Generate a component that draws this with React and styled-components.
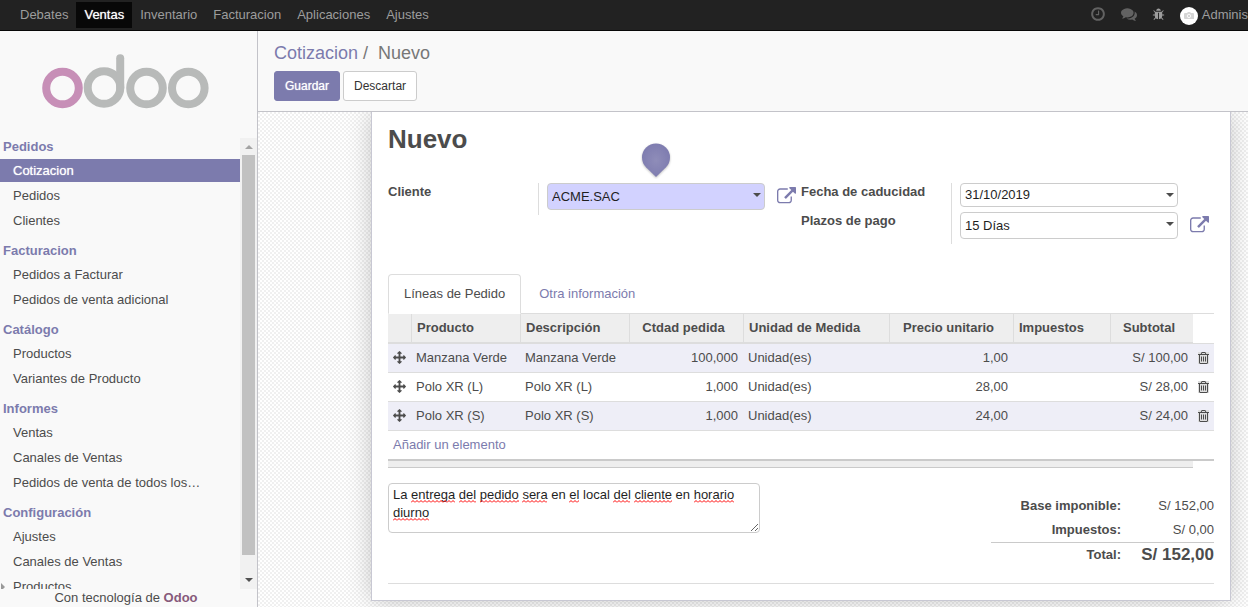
import React, { useState } from "react";
import styled, { createGlobalStyle, css } from "styled-components";

const GlobalStyle = createGlobalStyle`
  *, *::before, *::after { box-sizing: border-box; }
  body {
    margin: 0;
    color: #4c4c4c;
    background: #fff;
    font: 13px/18px "Liberation Sans", Arial, sans-serif;
  }
  button, input, select, textarea { font: inherit; color: inherit; }
  a { text-decoration: none; }
  ul { list-style: none; margin: 0; padding: 0; }
`;

const purple = "#7c7bad";
const line = "#ddd";
const edge = "#c3c3c9";

/* Thickens light text on a dark fill without changing its width. */
const strongLight = css`
  color: #fff;
  text-shadow: 0 0 1px rgba(255, 255, 255, 0.8);
`;

/* ---------- icons ---------- */

const iconPaths = {
  clock:
    "M1024 544v448q0 14-9 23t-23 9h-320q-14 0-23-9t-9-23v-64q0-14 9-23t23-9h224v-352q0-14 9-23t23-9h64q14 0 23 9t9 23zm416 352q0-148-73-273t-198-198-273-73-273 73-198 198-73 273 73 273 198 198 273 73 273-73 198-198 73-273zm224 0q0 209-103 385.5t-279.5 279.5-385.5 103-385.5-103-279.5-279.5-103-385.5 103-385.5 279.5-279.5 385.5-103 385.5 103 279.5 279.5 103 385.5z",
  comments:
    "M1408 768q0 139-94 257t-256.5 186.5-353.5 68.5q-86 0-176-16-124 88-278 128-36 9-86 16h-3q-11 0-20.5-8t-11.5-21q-1-3-1-6.5t.5-6.5 2-6l2.5-5 3.5-5.5 4-5 4.5-5 4-4.5q5-6 23-25t26-29.5 22.5-29 25-38.5 20.5-44q-124-72-195-177t-71-224q0-139 94-257t256.5-186.5 353.5-68.5 353.5 68.5 256.5 186.5 94 257zm384 256q0 120-71 224.5t-195 176.5q10 24 20.5 44t25 38.5 22.5 29 26 29.5 23 25q1 1 4 4.5t4.5 5 4 5 3.5 5.5l2.5 5 2 6 .5 6.5-1 6.5q-3 14-13 22t-22 7q-50-7-86-16-154-40-278-128-90 16-176 16-271 0-472-132 58 4 88 4 161 0 309-45t264-129q125-92 192-212t67-254q0-77-23-152 129 71 204 178t75 230z",
  bug: "M1696 960q0 26-19 45t-45 19h-224q0 171-67 290l208 209q19 19 19 45t-19 45q-18 19-45 19t-45-19l-198-197q-5 5-15 13t-42 28.5-65 36.5-82 29-97 13v-896h-128v896q-51 0-101.5-13.5t-87-33-66-39-43.5-32.5l-15-14-183 207q-20 21-48 21-24 0-43-16-19-18-20.5-44.5t15.5-46.5l202-227q-58-114-58-274h-224q-26 0-45-19t-19-45 19-45 45-19h224v-294l-173-173q-19-19-19-45t19-45 45-19 45 19l173 173h844l173-173q19-19 45-19t45 19 19 45-19 45l-173 173v294h224q26 0 45 19t19 45zm-480-576h-640q0-133 93.5-226.5t226.5-93.5 226.5 93.5 93.5 226.5z",
  move: "M1792 896q0 26-19 45l-256 256q-19 19-45 19t-45-19-19-45v-128h-384v384h128q26 0 45 19t19 45-19 45l-256 256q-19 19-45 19t-45-19l-256-256q-19-19-19-45t19-45 45-19h128v-384h-384v128q0 26-19 45t-45 19-45-19l-256-256q-19-19-19-45t19-45l256-256q19-19 45-19t45 19 19 45v128h384v-384h-128q-26 0-45-19t-19-45 19-45l256-256q19-19 45-19t45 19l256 256q19 19 19 45t-19 45-45 19h-128v384h384v-128q0-26 19-45t45-19 45 19l256 256q19 19 19 45z",
  trash:
    "M704 736v576q0 14-9 23t-23 9h-64q-14 0-23-9t-9-23v-576q0-14 9-23t23-9h64q14 0 23 9t9 23zm256 0v576q0 14-9 23t-23 9h-64q-14 0-23-9t-9-23v-576q0-14 9-23t23-9h64q14 0 23 9t9 23zm256 0v576q0 14-9 23t-23 9h-64q-14 0-23-9t-9-23v-576q0-14 9-23t23-9h64q14 0 23 9t9 23zm128 724v-948h-896v948q0 22 7 40.5t14.5 27 10.5 8.5h832q3 0 10.5-8.5t14.5-27 7-40.5zm-672-1076h448l-48-117q-7-9-17-11h-317q-10 2-17 11zm928 32v64q0 14-9 23t-23 9h-96v948q0 83-47 143.5t-113 60.5h-832q-66 0-113-58.5t-47-141.5v-952h-96q-14 0-23-9t-9-23v-64q0-14 9-23t23-9h309l70-167q15-37 54-63t79-26h320q40 0 79 26t54 63l70 167h309q14 0 23 9t9 23z",
  external:
    "M1408 928v320q0 119-84.5 203.5t-203.5 84.5h-832q-119 0-203.5-84.5t-84.5-203.5v-832q0-119 84.5-203.5t203.5-84.5h704q14 0 23 9t9 23v64q0 14-9 23t-23 9h-704q-66 0-113 47t-47 113v832q0 66 47 113t113 47h832q66 0 113-47t47-113v-320q0-14 9-23t23-9h64q14 0 23 9t9 23zm384-864v512q0 26-19 45t-45 19-45-19l-176-176-652 652q-10 10-23 10t-23-10l-114-114q-10-10-10-23t10-23l652-652-176-176q-19-19-19-45t19-45 45-19h512q26 0 45 19t19 45z",
};

const Svg = styled.svg`
  display: block;
  flex: none;
  fill: currentColor;
`;

const Icon = ({ name, size, width = size, viewBox = "0 0 1792 1792" }) => (
  <Svg width={width} height={size} viewBox={viewBox} aria-hidden="true">
    <path d={iconPaths[name]} />
  </Svg>
);

const CaretSvg = styled.svg`
  position: absolute;
  top: 10px;
  right: 4px;
  fill: #4c4c4c;
  pointer-events: none;
`;

const Caret = () => (
  <CaretSvg width="8" height="4" viewBox="0 0 8 4" aria-hidden="true">
    <path d="M0 0h8L4 4z" />
  </CaretSvg>
);

const Logo = () => (
  <svg width="168" height="56" viewBox="0 0 168 56" role="img" aria-label="odoo">
    <g fill="none" strokeWidth="8" stroke="#b8bab9">
      <circle cx="20.5" cy="34" r="16.3" stroke="#c78fb7" />
      <circle cx="62" cy="33.5" r="16.3" />
      <path d="M78.2 34V4.2" strokeLinecap="round" />
      <circle cx="104.5" cy="34" r="16.3" />
      <circle cx="146.3" cy="34" r="16.3" />
    </g>
  </svg>
);

/* ---------- shell ---------- */

const Page = styled.div`
  display: flex;
  flex-direction: column;
  height: 100vh;
  overflow: hidden;
`;

const TopBar = styled.header`
  display: flex;
  flex: none;
  justify-content: space-between;
  height: 31px;
  padding: 2px 0 2px 12px;
  background: #222;
  border-bottom: 1px solid #080808;
  color: #9d9d9d;
`;

const AppMenu = styled.nav`
  display: flex;
`;

const AppLink = styled.a`
  padding: 4px 8px;
  color: #9d9d9d;
  ${(p) =>
    p.$active &&
    css`
      background: #080808;
      ${strongLight}
    `}
`;

const Tray = styled.div`
  display: flex;
  align-items: center;
`;

const TrayButton = styled.button`
  display: flex;
  border: 0;
  padding: 0 0 2px;
  margin-right: 15px;
  background: none;
  color: ${(p) => (p.$bright ? "#9d9d9d" : "#626262")};
`;

const UserButton = styled.button`
  display: flex;
  align-items: center;
  gap: 4px;
  border: 0;
  padding: 0;
  background: none;
  white-space: nowrap;
`;

const Avatar = styled.span`
  display: grid;
  place-items: center;
  width: 18px;
  height: 18px;
  margin-top: 2px;
  border-radius: 50%;
  background: #fff;
`;

const Body = styled.div`
  display: flex;
  flex: 1;
  min-height: 0;
`;

/* ---------- sidebar ---------- */

const Sidebar = styled.aside`
  display: flex;
  flex-direction: column;
  flex: none;
  width: 258px;
  background: #f9f9f9;
  border-right: 1px solid ${edge};
`;

const Brand = styled.a`
  display: block;
  flex: none;
  height: 107px;
  padding: 23px 0 0 42px;
`;

const MenuScroller = styled.div`
  display: flex;
  flex: 1;
  min-height: 0;
`;

const Menu = styled.nav`
  flex: 1;
  min-width: 0;
  overflow: hidden;
`;

const MenuGroup = styled.section`
  margin-bottom: 10px;
`;

const MenuHeading = styled.h2`
  margin: 0 0 4px;
  padding-left: 3px;
  color: ${purple};
  font-size: 13px;
  line-height: 17px;
`;

const MenuList = styled.ul`
  display: flex;
  flex-direction: column;
  gap: 2px;
`;

const MenuLink = styled.a`
  display: block;
  position: relative;
  padding-left: 13px;
  line-height: 23px;
  color: #4c4c4c;
  ${(p) =>
    p.$active &&
    css`
      background: ${purple};
      ${strongLight}
    `}
  ${(p) =>
    p.$folded &&
    css`
      &::before {
        content: "";
        position: absolute;
        left: 1px;
        top: 8px;
        border: 4px solid transparent;
        border-left-color: #999;
        border-right-width: 0;
      }
    `}
`;

const Track = styled.div`
  display: flex;
  flex-direction: column;
  align-items: center;
  width: 17px;
  padding: 7px 0;
  background: #f1f1f1;
`;

const Thumb = styled.div`
  width: 13px;
  flex: 1;
  margin: 6px 0 23px;
  background: #c1c1c1;
`;

const TrackArrow = styled.span`
  border: 4px solid transparent;
  ${(p) =>
    p.$up
      ? "border-top-width: 0; border-bottom-color: #a3a3a3;"
      : "border-bottom-width: 0; border-top-color: #505050;"}
`;

const Powered = styled.footer`
  flex: none;
  padding-right: 5px;
  text-align: center;
  a { color: #875a7b; font-weight: bold; }
`;

/* ---------- main ---------- */

const Main = styled.main`
  display: flex;
  flex-direction: column;
  flex: 1;
  min-width: 0;
`;

const ControlPanel = styled.div`
  flex: none;
  height: 81px;
  padding: 12px 16px 0;
  background: #f9f9f9;
  border-bottom: 1px solid ${edge};
`;

const Crumbs = styled.nav`
  display: flex;
  margin-bottom: 8px;
  color: #777;
  font-size: 18px;
  line-height: 20px;
  a { color: ${purple}; margin-right: 5px; }
  span { margin-left: 10px; }
`;

const Actions = styled.div`
  display: flex;
  gap: 3px;
`;

const Button = styled.button`
  height: 30px;
  padding: 0 10px;
  border: 1px solid #ccc;
  border-radius: 3px;
  background: #fff;
  color: #333;
  font-size: 12px;
  ${(p) =>
    p.$primary &&
    css`
      border-color: ${purple};
      background: ${purple};
      ${strongLight}
    `}
`;

const Canvas = styled.div`
  flex: 1;
  min-height: 0;
  overflow: hidden;
  padding: 0 17px 0 113px;
  background: repeating-conic-gradient(#fff 0 25%, #f0f0f0 0 50%) 0 0 / 4px 4px;
`;

const Sheet = styled.form`
  padding: 12px 16px 16px;
  background: #fff;
  border: 1px solid #c8c8d3;
  border-top: 0;
  box-shadow: 0 0 24px -2px rgba(0, 0, 0, 0.25);
`;

const Title = styled.h1`
  margin: 0 0 29px;
  font-size: 26px;
  line-height: 30px;
`;

const Groups = styled.div`
  display: grid;
  grid-template-columns: 1fr 1fr;
  align-items: start;
`;

const Group = styled.div`
  display: grid;
  grid-template-columns: 151px 1fr;
  min-height: ${(p) => (p.$tall ? "61px" : "32px")};
`;

const Labels = styled.div`
  display: grid;
  align-content: start;
  row-gap: 11px;
  border-right: 1px solid ${line};
  label { font-weight: bold; }
`;

const Fields = styled.div`
  display: grid;
  align-content: start;
  row-gap: 5px;
  padding-left: 8px;
`;

const FieldRow = styled.div`
  display: flex;
  align-items: center;
`;

const Control = styled.div`
  position: relative;
  flex: 1;
  max-width: 218px;
`;

const fieldBox = css`
  display: block;
  width: 100%;
  padding: 0 16px 0 4px;
  border: 1px solid #ccc;
  border-radius: 4px;
  background: ${(p) => (p.$required ? "#d2d2ff" : "#fff")};
  color: #1f1f1f;
  appearance: none;
`;

const Select = styled.select`
  ${fieldBox}
  height: 27px;
`;

const DateInput = styled.input`
  ${fieldBox}
  height: 24px;
  padding-bottom: 2px;
`;

const OpenButton = styled.button`
  display: flex;
  flex: none;
  margin-left: 12px;
  padding: 0;
  border: 0;
  background: none;
  color: ${purple};
`;

const TipPin = styled.svg`
  position: absolute;
  left: 50%;
  bottom: calc(100% + 4px);
  margin-left: -16px;
`;

const Tabs = styled.div`
  display: flex;
  gap: 2px;
  margin-top: 30px;
  border-bottom: 1px solid ${line};
`;

const Tab = styled.button`
  height: 40px;
  margin-bottom: -1px;
  padding: 0 15px;
  border: 1px solid ${(p) => (p.$active ? line : "transparent")};
  border-bottom-color: ${(p) => (p.$active ? "#fff" : "transparent")};
  border-radius: 4px 4px 0 0;
  background: ${(p) => (p.$active ? "#fff" : "none")};
  color: ${(p) => (p.$active ? "#4c4c4c" : purple)};
`;

/* ---------- order lines ---------- */

const Lines = styled.table`
  width: 100%;
  table-layout: fixed;
  border-collapse: separate;
  border-spacing: 0;
  white-space: nowrap;
`;

const Th = styled.th`
  height: 30px;
  padding: 0 ${(p) => (p.$align ? 11 : 5)}px 0 5px;
  border-left: ${(p) => (p.$first ? "0" : `1px solid ${line}`)};
  border-bottom: 2px solid ${line};
  background: #eee;
  text-align: ${(p) => p.$align || "left"};
`;

const ThBlank = styled.td`
  padding: 0;
  border-bottom: 1px solid ${line};
`;

const Row = styled.tr`
  background: ${(p) => (p.$odd ? "#eeeef7" : "#fff")};
`;

const Td = styled.td`
  height: 29px;
  padding: 0 5px;
  border-bottom: 1px solid ${line};
  text-align: ${(p) => p.$align || "left"};
`;

const IconCell = styled(Td)`
  padding-bottom: 1px;
`;

const AddCell = styled.td`
  height: 30px;
  padding: 0 5px;
  border-bottom: 2px solid #cacaca;
  a { color: ${purple}; }
`;

const FootCell = styled.td`
  height: 7px;
  padding: 0;
  background: #eee;
  border-bottom: 1px solid #cacaca;
`;

const TrashButton = styled.button`
  display: flex;
  padding: 0;
  border: 0;
  background: #dedede;
`;

/* ---------- note and totals ---------- */

const Bottom = styled.div`
  display: flex;
  justify-content: space-between;
  align-items: flex-start;
  margin-top: 15px;
  padding-bottom: 15px;
  border-bottom: 1px solid ${line};
`;

const NoteBox = styled.div`
  position: relative;
  width: 45%;
`;

const Note = styled.textarea`
  display: block;
  width: 100%;
  height: 50px;
  padding: 2px 4px;
  border: 1px solid #ccc;
  border-radius: 4px;
  color: #1f1f1f;
  overflow: hidden;
`;

const Squiggles = styled.svg`
  position: absolute;
  inset: 0;
  width: 100%;
  height: 100%;
  pointer-events: none;
`;

const Totals = styled.table`
  margin-top: 11px;
  border-collapse: collapse;
  text-align: right;
`;

const TotalLabel = styled.th`
  width: 130px;
  height: 24px;
  padding: 0;
  text-align: right;
`;

const TotalValue = styled.td`
  width: 93px;
  padding: 0;
  ${(p) => p.$grand && "font-size: 17px; font-weight: bold;"}
`;

const GrandRow = styled.tr`
  border-top: 1px solid #cacaca;
  height: 26px;
`;

/* ---------- data ---------- */

const apps = ["Debates", "Ventas", "Inventario", "Facturacion", "Aplicaciones", "Ajustes"];

const menu = [
  ["Pedidos", ["Cotizacion", "Pedidos", "Clientes"]],
  ["Facturacion", ["Pedidos a Facturar", "Pedidos de venta adicional"]],
  ["Catálogo", ["Productos", "Variantes de Producto"]],
  ["Informes", ["Ventas", "Canales de Ventas", "Pedidos de venta de todos los…"]],
  ["Configuración", ["Ajustes", "Canales de Ventas", "Productos"]],
];

const columns = [
  { title: "", width: 23 },
  { title: "Producto", width: 109 },
  { title: "Descripción", width: 109 },
  { title: "Ctdad pedida", width: 114, align: "center" },
  { title: "Unidad de Medida", width: 146 },
  { title: "Precio unitario", width: 124, align: "center" },
  { title: "Impuestos", width: 97 },
  { title: "Subtotal", width: 83, align: "center" },
];

const orderLines = [
  ["Manzana Verde", "100,000", "1,00", "S/ 100,00"],
  ["Polo XR (L)", "1,000", "28,00", "S/ 28,00"],
  ["Polo XR (S)", "1,000", "24,00", "S/ 24,00"],
];

const noteLines = [
  "La entrega del pedido sera en el local del cliente en horario",
  "diurno",
];
const flagged = new Set(["entrega", "del", "pedido", "sera", "el", "cliente", "horario", "diurno"]);

/* Finds where each flagged word of the note starts and how wide it is. */
function spellingMarks() {
  const ctx = document.createElement("canvas").getContext("2d");
  ctx.font = '13px "Liberation Sans", Arial, sans-serif';
  const marks = [];
  noteLines.forEach((text, row) => {
    let before = "";
    text.split(" ").forEach((word) => {
      if (flagged.has(word)) {
        marks.push({
          x: 5 + Math.round(ctx.measureText(before).width),
          y: 16 + row * 18,
          width: Math.round(ctx.measureText(word).width),
        });
      }
      before += word + " ";
    });
  });
  return marks;
}

export default function App() {
  const [note, setNote] = useState(noteLines.join(" "));
  const [marks] = useState(spellingMarks);

  return (
    <Page>
      <GlobalStyle />
      <TopBar>
        <AppMenu>
          {apps.map((name) => (
            <AppLink key={name} href="#" $active={name === "Ventas"}>
              {name}
            </AppLink>
          ))}
        </AppMenu>
        <Tray>
          <TrayButton aria-label="Actividades"><Icon name="clock" size={16} /></TrayButton>
          <TrayButton aria-label="Conversaciones"><Icon name="comments" size={16} /></TrayButton>
          <TrayButton $bright aria-label="Depurar"><Icon name="bug" size={13} /></TrayButton>
          <UserButton>
            <Avatar>
              <svg width="10" height="8" viewBox="0 0 10 8" aria-hidden="true">
                <path d="M1 1h2l1-1h2l1 1h2q1 0 1 1v5H1Q0 7 0 6V2q0-1 1-1z" fill="#d5d5d5" />
                <circle cx="5" cy="4" r="1.7" fill="none" stroke="#fff" strokeWidth=".8" />
              </svg>
            </Avatar>
            Adminis
          </UserButton>
        </Tray>
      </TopBar>

      <Body>
        <Sidebar>
          <Brand href="#"><Logo /></Brand>
          <MenuScroller>
            <Menu>
              {menu.map(([heading, items]) => (
                <MenuGroup key={heading}>
                  <MenuHeading>{heading}</MenuHeading>
                  <MenuList>
                    {items.map((item) => (
                      <li key={item}>
                        <MenuLink
                          href="#"
                          $active={item === "Cotizacion"}
                          $folded={heading === "Configuración" && item === "Productos"}
                        >
                          {item}
                        </MenuLink>
                      </li>
                    ))}
                  </MenuList>
                </MenuGroup>
              ))}
            </Menu>
            <Track aria-hidden="true">
              <TrackArrow $up />
              <Thumb />
              <TrackArrow />
            </Track>
          </MenuScroller>
          <Powered>
            Con tecnología de <a href="#">Odoo</a>
          </Powered>
        </Sidebar>

        <Main>
          <ControlPanel>
            <Crumbs>
              <a href="#">Cotizacion</a>/<span>Nuevo</span>
            </Crumbs>
            <Actions>
              <Button type="submit" form="order" $primary>Guardar</Button>
              <Button type="button">Descartar</Button>
            </Actions>
          </ControlPanel>

          <Canvas>
            <Sheet id="order" onSubmit={(e) => e.preventDefault()}>
              <Title>Nuevo</Title>

              <Groups>
                <Group>
                  <Labels><label htmlFor="client">Cliente</label></Labels>
                  <Fields>
                    <FieldRow>
                      <Control>
                        <Select id="client" $required><option>ACME.SAC</option></Select>
                        <Caret />
                        <TipPin width="32" height="38" viewBox="0 0 32 38" aria-hidden="true">
                          <defs>
                            <radialGradient id="pin">
                              <stop offset="0" stopColor="#8f8db9" />
                              <stop offset="1" stopColor="#7f7db0" />
                            </radialGradient>
                          </defs>
                          <path
                            d="M16 36L6 26.3A14 14 0 1 1 26 26.3z"
                            fill="url(#pin)"
                            filter="drop-shadow(0 1px 1px rgba(0,0,0,.25))"
                          />
                        </TipPin>
                      </Control>
                      <OpenButton type="button" aria-label="Abrir cliente">
                        <Icon name="external" size={19} />
                      </OpenButton>
                    </FieldRow>
                  </Fields>
                </Group>

                <Group $tall>
                  <Labels>
                    <label htmlFor="expiry">Fecha de caducidad</label>
                    <label htmlFor="terms">Plazos de pago</label>
                  </Labels>
                  <Fields>
                    <FieldRow>
                      <Control>
                        <DateInput id="expiry" type="text" defaultValue="31/10/2019" />
                        <Caret />
                      </Control>
                    </FieldRow>
                    <FieldRow>
                      <Control>
                        <Select id="terms"><option>15 Días</option></Select>
                        <Caret />
                      </Control>
                      <OpenButton type="button" aria-label="Abrir plazo de pago">
                        <Icon name="external" size={19} />
                      </OpenButton>
                    </FieldRow>
                  </Fields>
                </Group>
              </Groups>

              <Tabs role="tablist">
                <Tab type="button" role="tab" aria-selected="true" $active>Líneas de Pedido</Tab>
                <Tab type="button" role="tab" aria-selected="false">Otra información</Tab>
              </Tabs>

              <Lines>
                <colgroup>
                  {columns.map((c) => <col key={c.title} width={c.width} />)}
                  <col width="21" />
                </colgroup>
                <thead>
                  <tr>
                    {columns.map((c, i) => (
                      <Th key={c.title} $first={i === 0} $align={c.align}>{c.title}</Th>
                    ))}
                    <ThBlank />
                  </tr>
                </thead>
                <tbody>
                  {orderLines.map(([product, quantity, price, subtotal], i) => (
                    <Row key={product} $odd={i % 2 === 0}>
                      <IconCell><Icon name="move" size={13} /></IconCell>
                      <Td>{product}</Td>
                      <Td>{product}</Td>
                      <Td $align="right">{quantity}</Td>
                      <Td>Unidad(es)</Td>
                      <Td $align="right">{price}</Td>
                      <Td />
                      <Td $align="right">{subtotal}</Td>
                      <IconCell>
                        <TrashButton type="button" aria-label={`Eliminar ${product}`}>
                          <Icon name="trash" size={12} width={11} viewBox="192 128 1408 1536" />
                        </TrashButton>
                      </IconCell>
                    </Row>
                  ))}
                  <tr>
                    <AddCell colSpan={9}><a href="#">Añadir un elemento</a></AddCell>
                  </tr>
                </tbody>
                <tfoot>
                  <tr>
                    <FootCell colSpan={8} />
                  </tr>
                </tfoot>
              </Lines>

              <Bottom>
                <NoteBox>
                  <Note
                    aria-label="Términos y condiciones"
                    spellCheck={false}
                    value={note}
                    onChange={(e) => setNote(e.target.value)}
                  />
                  <Squiggles aria-hidden="true">
                    <defs>
                      <pattern id="wave" width="4" height="3" patternUnits="userSpaceOnUse" y="1">
                        <path d="M0 2.5L2 .5L4 2.5" fill="none" stroke="#f00" strokeWidth="1" />
                      </pattern>
                    </defs>
                    {marks.map((m) => (
                      <g key={`${m.x}-${m.y}`} transform={`translate(${m.x} ${m.y})`}>
                        <rect y="1" width={m.width} height="3" fill="url(#wave)" />
                      </g>
                    ))}
                  </Squiggles>
                </NoteBox>

                <Totals>
                  <tbody>
                    <tr>
                      <TotalLabel scope="row">Base imponible:</TotalLabel>
                      <TotalValue>S/ 152,00</TotalValue>
                    </tr>
                    <tr>
                      <TotalLabel scope="row">Impuestos:</TotalLabel>
                      <TotalValue>S/ 0,00</TotalValue>
                    </tr>
                    <GrandRow>
                      <TotalLabel scope="row">Total:</TotalLabel>
                      <TotalValue $grand>S/ 152,00</TotalValue>
                    </GrandRow>
                  </tbody>
                </Totals>
              </Bottom>
            </Sheet>
          </Canvas>
        </Main>
      </Body>
    </Page>
  );
}
